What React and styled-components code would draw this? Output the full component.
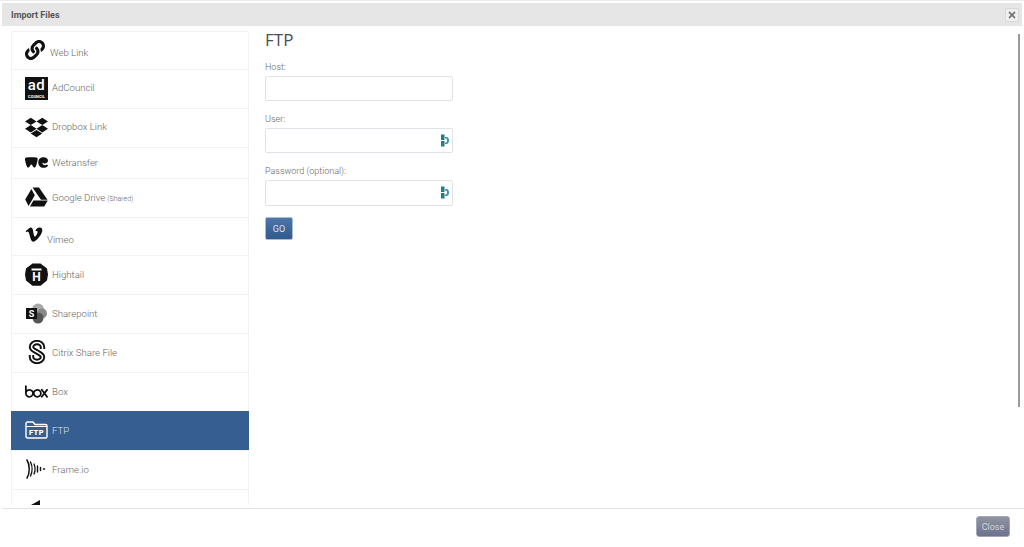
import React from 'react'
import styled, { createGlobalStyle } from 'styled-components'
import { FaLink, FaDropbox, FaVimeoV, FaTimes } from 'react-icons/fa'
import { SiBox, SiWetransfer } from 'react-icons/si'

const Global = createGlobalStyle`
    html, body {
        margin: 0;
        padding: 0;
        background: #fff;
        font-family: Roboto, "Liberation Sans", sans-serif;
    }
`;

const Page = styled.div`
    width: 1024px;
    height: 547px;
    display: flex;
    flex-direction: column;
    overflow: hidden;
    box-sizing: border-box;
    padding-top: 3px;
    border-top: 1px solid #ececec;
`;

const Header = styled.div`
    flex: none;
    height: 23px;
    margin: -1px 2px 0;
    padding: 0 9px;
    background: #e6e6e6;
    display: flex;
    align-items: center;
    justify-content: space-between;
`;

const Title = styled.span`
    font-size: 9px;
    font-weight: 700;
    color: #555;
`;

const CloseX = styled.button`
    width: 14px;
    height: 14px;
    margin-right: -6px;
    padding: 0;
    border: 1px solid #d8d8d8;
    border-radius: 2px;
    background: #f0f0f0;
    color: #777;
    display: flex;
    align-items: center;
    justify-content: center;
    font-size: 10px;
`;

const Body = styled.div`
    flex: 1;
    min-height: 0;
    display: flex;
    padding: 5px 0 3px 11px;
    position: relative;
`;

const List = styled.div`
    flex: none;
    width: 238px;
    overflow: hidden;
    box-sizing: border-box;
    border-radius: 3px 3px 0 0;
    box-shadow: inset 1px 0 0 #f3f3f3, inset -1px 0 0 #f3f3f3;
`;

const Row = styled.div`
    box-sizing: border-box;
    height: ${p => p.$h || 39}px;
    display: flex;
    align-items: center;
    gap: ${p => p.$gap || 4}px;
    padding: 0 0 2px 14px;
    font-size: 9.6px;
    font-weight: 300;
    color: ${p => (p.$active ? '#d8e2f0' : '#666')};
    background: ${p => (p.$active ? '#375e91' : 'transparent')};
    border-top: 1px solid ${p => (p.$active ? '#375e91' : '#f2f2f2')};
`;

const IconBox = styled.span`
    flex: none;
    width: ${p => p.$w || 23}px;
    display: flex;
    align-items: center;
    justify-content: center;
    color: ${p => (p.$active ? '#fff' : '#111')};
    font-size: ${p => p.$size || 22}px;
    transform: translateY(${p => p.$up || 0}px);
`;

const Label = styled.span`
    transform: translateY(${p => p.$down || 0}px);
`;

const Small = styled.small`
    font-size: 7px;
    margin-left: 2px;
`;

const Content = styled.div`
    flex: 1;
    padding-left: 16px;
    display: flex;
    flex-direction: column;
    align-items: flex-start;
`;

const Heading = styled.h2`
    margin: 0 0 12px;
    font-family: "Open Sans", sans-serif;
    font-size: 17px;
    line-height: 18px;
    font-weight: 500;
    color: #4a4f55;
`;

const Field = styled.div`
    margin-bottom: 12px;
    width: 188px;
`;

const FieldLabel = styled.label`
    display: block;
    margin-bottom: 3px;
    font-size: 9px;
    line-height: 12px;
    font-weight: 300;
    color: #666;
`;

const InputWrap = styled.div`
    position: relative;
`;

const Input = styled.input`
    display: block;
    box-sizing: border-box;
    width: 188px;
    height: ${p => p.$h || 25}px;
    border: 1px solid #dde3e9;
    border-radius: 2px;
    background: #fff;
    outline: none;
`;

const KeyIcon = styled.svg`
    position: absolute;
    top: 6px;
    right: 4px;
    width: 8px;
    height: 13px;
`;

const Go = styled.button`
    width: 28px;
    height: 23px;
    margin-top: -1px;
    padding: 0;
    border: 1px solid #a9bdd6;
    border-radius: 2px;
    background: linear-gradient(#4c76aa, #33588c);
    color: #d8e2f0;
    font-family: Roboto, sans-serif;
    font-size: 9px;
`;

const Thumb = styled.div`
    position: absolute;
    top: 8px;
    right: 4px;
    width: 2px;
    height: 373px;
    background: #9a9a9a;
`;

const Footer = styled.div`
    flex: none;
    height: 39px;
    box-sizing: border-box;
    margin-left: 2px;
    border-top: 1px solid #e2e2e2;
    display: flex;
    justify-content: flex-end;
    padding: 7px 14px 0 0;
`;

const CloseBtn = styled.button`
    width: 34px;
    height: 21px;
    padding: 0;
    border: 1px solid #a3a6ba;
    border-radius: 3px;
    background: linear-gradient(#90949f, #6d7290);
    color: #d2d4da;
    font-family: Roboto, sans-serif;
    font-size: 9px;
`;

const AdLogo = () => (
    <svg width="23" height="23" viewBox="0 0 23 23">
        <rect width="23" height="23" fill="#111" />
        <text x="11.5" y="13" textAnchor="middle" fontFamily="Roboto" fontWeight="500" fontSize="15" letterSpacing=".5" fill="#fff">ad</text>
        <text x="11.5" y="21" textAnchor="middle" fontFamily="Roboto" fontWeight="700" fontSize="4" fill="#fff">COUNCIL</text>
    </svg>
);

const DriveLogo = () => (
    <svg width="23" height="20" viewBox="0 0 23 20">
        <path d="M7.500 0.500h6.500l8.500 12.200h-6.500z" fill="#111" />
        <path d="M6.400 2L0.200 12.600l3.400 6.400L9.800 8.200z" fill="#111" />
        <path d="M8.400 13.400h14.300l-3.400 6.200H5z" fill="#111" />
    </svg>
);

const HightailLogo = () => (
    <svg width="23" height="23" viewBox="0 0 23 23">
        <path d="M7.500 0.500h8l6.500 5 1 6-1 6-6.500 5.200h-8L1 17.500 0 11.500l1-6z" fill="#111" />
        <rect x="6.500" y="5.500" width="10" height="2" fill="#fff" />
        <text x="11.500" y="18" textAnchor="middle" fontFamily="Roboto" fontWeight="700" fontSize="12" fill="#fff">H</text>
    </svg>
);

const SharepointLogo = () => (
    <svg width="23" height="21" viewBox="0 0 23 21">
        <circle cx="13" cy="6.500" r="6" fill="#aaa" />
        <circle cx="17" cy="10.500" r="5" fill="#888" />
        <circle cx="13" cy="15" r="5.500" fill="#555" />
        <rect x="1" y="5" width="11" height="11" fill="#111" />
        <text x="6.500" y="14" textAnchor="middle" fontFamily="Roboto" fontWeight="700" fontSize="9" fill="#fff">S</text>
    </svg>
);

const citrixS = 'M14 9V7a5.500 4.500 0 0 0-11 0c0 2.500 3 3.500 5.500 5s5.500 2.500 5.500 5a5.500 4.500 0 0 1-11 0v-2';

const CitrixLogo = () => (
    <svg width="18" height="24" viewBox="0 0 17 24" fill="none">
        <path d={citrixS} stroke="#111" strokeWidth="5.400" />
        <path d={citrixS} stroke="#fff" strokeWidth="1.500" />
    </svg>
);

const FtpLogo = () => (
    <svg width="23" height="18" viewBox="0 0 23 18">
        <path d="M1 15.500V2.500C1 1.500 1.500 1 2.500 1h5.500l2 2.500h10.500c1 0 1.500.5 1.500 1.500v10.500c0 1-.5 1.500-1.500 1.500h-18C1.500 17 1 16.500 1 15.500z" fill="none" stroke="#fff" strokeWidth="1.400" />
        <path d="M1 5.500h21" stroke="#fff" strokeWidth="1" />
        <text x="11.500" y="14" textAnchor="middle" fontFamily="Roboto" fontWeight="900" fontSize="7.500" letterSpacing=".4" fill="#fff">FTP</text>
    </svg>
);

const FrameLogo = () => (
    <svg width="23" height="20" viewBox="0 0 23 20" fill="none" stroke="#111" strokeLinecap="round">
        <path d="M2 1c3 5 3 13 0 18" strokeWidth="1.500" />
        <path d="M5.500 3c2 4 2 10 0 14" strokeWidth="1.400" />
        <path d="M9 5c1.300 3 1.300 7 0 10" strokeWidth="1.300" />
        <path d="M12.500 7v6" strokeWidth="1.400" />
        <path d="M15.500 8.500v3" strokeWidth="1.400" />
        <path d="M18.500 10h1" strokeWidth="1.600" />
    </svg>
);

const LastLogo = () => (
    <svg width="23" height="23" viewBox="0 0 23 23">
        <path d="M6 8L15 3v5z" fill="#111" />
    </svg>
);

const Key = () => (
    <KeyIcon viewBox="0 0 8 13">
        <path d="M0 .5h3.500v5.500H0zM0 7h3.500v5.500H0z" fill="#1d7f8c" />
        <path d="M4 3h1.500C7 3 8 4.500 8 6.500S7 10 5.500 10H4V8.500h1c.8 0 1-1 1-2s-.2-2-1-2H4z" fill="#3c93a3" />
    </KeyIcon>
);

const rows = [
    { name: 'Web Link', h: 38, icon: <FaLink />, size: 20, w: 20, down: 3, gap: 5 },
    { name: 'AdCouncil', icon: <AdLogo />, down: -1 },
    { name: 'Dropbox Link', icon: <FaDropbox />, size: 23, down: -1 },
    { name: 'Wetransfer', h: 31, icon: <SiWetransfer />, size: 23 },
    { name: 'Google Drive', small: '(Shared)', icon: <DriveLogo /> },
    { name: 'Vimeo', h: 38, icon: <FaVimeoV />, size: 19, up: -1, down: 4, w: 18, gap: 4 },
    { name: 'Hightail', icon: <HightailLogo /> },
    { name: 'Sharepoint', icon: <SharepointLogo /> },
    { name: 'Citrix Share File', icon: <CitrixLogo /> },
    { name: 'Box', icon: <SiBox />, size: 23 },
    { name: 'FTP', icon: <FtpLogo />, active: true },
    { name: 'Frame.io', icon: <FrameLogo /> },
    { name: '', icon: <LastLogo /> },
];

const fields = [
    { label: 'Host:' },
    { label: 'User:', key: true },
    { label: 'Password (optional):', key: true, h: 26 },
];

export default function App() {
    return (
        <Page>
            <Global />
            <Header>
                <Title>Import Files</Title>
                <CloseX><FaTimes /></CloseX>
            </Header>
            <Body>
                <List>
                    {rows.map((r, i) => (
                        <Row key={i} $h={r.h} $gap={r.gap} $active={r.active}>
                            <IconBox $size={r.size} $up={r.up} $w={r.w} $active={r.active}>{r.icon}</IconBox>
                            <Label $down={r.down}>
                                {r.name}
                                {r.small && <Small>{r.small}</Small>}
                            </Label>
                        </Row>
                    ))}
                </List>
                <Content>
                    <Heading>FTP</Heading>
                    {fields.map(f => (
                        <Field key={f.label}>
                            <FieldLabel>{f.label}</FieldLabel>
                            <InputWrap>
                                <Input $h={f.h} />
                                {f.key && <Key />}
                            </InputWrap>
                        </Field>
                    ))}
                    <Go>GO</Go>
                </Content>
                <Thumb />
            </Body>
            <Footer>
                <CloseBtn>Close</CloseBtn>
            </Footer>
        </Page>
    )
}
